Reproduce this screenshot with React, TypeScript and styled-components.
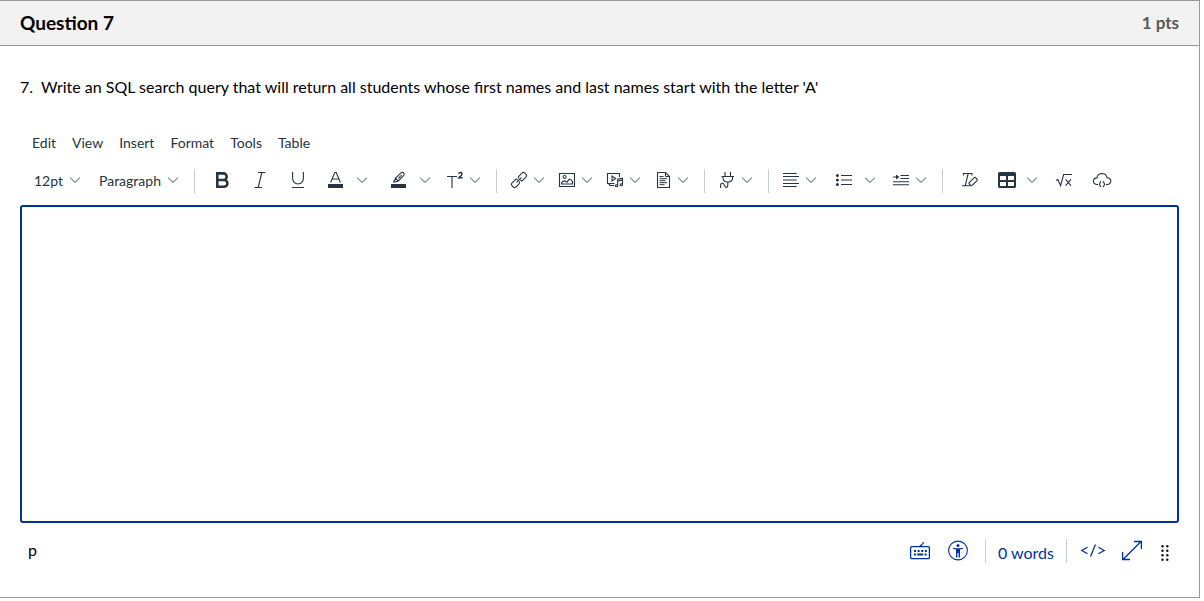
import React from "react";
import styled, { createGlobalStyle } from "styled-components";

const ink = "#273540";
const blue = "#003399";

const GlobalStyle = createGlobalStyle`
  *, *::before, *::after { box-sizing: border-box; }
  body {
    margin: 0;
    background: #ffffff;
    color: #000000;
    font-family: Lato, "Liberation Sans", sans-serif;
    font-size: 16px;
    line-height: 24px;
  }
`;

const Card = styled.main`
  margin-right: 4px;
  border: 1px solid #999999;
  border-left: 0;
`;

const Header = styled.header`
  display: flex;
  align-items: center;
  justify-content: space-between;
  padding: 10px 20px;
  background: #f2f2f2;
  border-bottom: 1px solid #999999;
`;

const Title = styled.h1`
  margin: 0;
  font-size: 19px;
  line-height: 24px;
  font-weight: 700;
`;

const Points = styled.span`
  font-size: 17px;
  font-weight: 700;
  color: #595959;
`;

const Body = styled.div`
  padding: 29px 20px 34px;
`;

const Prompt = styled.p`
  margin: 0 0 34px;
  white-space: pre-wrap;
`;

const MenuBar = styled.nav`
  display: flex;
  gap: 16px;
  padding: 0 12px;
`;

const MenuButton = styled.button`
  padding: 0;
  border: 0;
  background: none;
  color: ${ink};
  font: inherit;
  font-size: 14px;
  line-height: 20px;
`;

const Toolbar = styled.div`
  display: flex;
  align-items: center;
  height: 36px;
  margin: 10px 0 6px;
`;

const Group = styled.div<{ $start?: number; $end?: number; $gap?: number; $divided?: boolean }>`
  display: flex;
  align-items: center;
  gap: ${(p) => p.$gap ?? 0}px;
  height: 24px;
  padding-left: ${(p) => p.$start ?? 10}px;
  padding-right: ${(p) => p.$end ?? 14}px;
  border-left: ${(p) => (p.$divided ? "1px solid #c7cdd1" : "0")};
`;

const Cluster = styled.div<{ $gap?: number }>`
  display: flex;
  gap: ${(p) => p.$gap ?? 0}px;
`;

const SelectBox = styled.div<{ $width: number }>`
  display: grid;
  align-items: center;
  width: ${(p) => p.$width}px;

  > * { grid-area: 1 / 1; }
  > svg { justify-self: end; pointer-events: none; }
`;

const Select = styled.select`
  appearance: none;
  width: 100%;
  padding: 0;
  border: 0;
  background: none;
  color: ${ink};
  font: inherit;
  font-size: 14px;
  line-height: 20px;
`;

const ToolButton = styled.button<{ $width?: number }>`
  display: flex;
  align-items: center;
  justify-content: center;
  width: ${(p) => p.$width ?? 38}px;
  height: 24px;
  padding: 0;
  border: 0;
  background: none;
  color: ${ink};
`;

const DropButton = styled(ToolButton)`
  justify-content: space-between;
  padding-left: 2px;
`;

const Glyph = styled.svg`
  display: block;
  flex: none;
  overflow: visible;
  fill: none;
  stroke: currentColor;
  stroke-width: 1.1;
`;

const ChevronGlyph = styled(Glyph)`
  color: #414d57;
  stroke-width: 1;
`;

const Editor = styled.textarea`
  display: block;
  width: 100%;
  min-height: 318px;
  padding: 10px;
  border: 2px solid ${blue};
  border-radius: 3px;
  outline: 0;
  resize: none;
  font: inherit;
`;

const StatusBar = styled.footer`
  display: flex;
  align-items: center;
  justify-content: space-between;
  height: 24px;
  margin-top: 16px;
  padding-left: 8px;
`;

const ElementPath = styled.span`
  padding-bottom: 2px;
`;

const StatusTools = styled.div`
  display: flex;
  align-items: center;
`;

const StatusButton = styled(ToolButton)`
  color: ${blue};
`;

const WordCount = styled.button`
  height: 24px;
  margin: 0 6px 0 8px;
  padding: 4px 12px 0;
  border: 1px solid #c7cdd1;
  border-width: 0 1px;
  background: none;
  color: ${blue};
  font: inherit;
  line-height: 20px;
`;

const Chevron = () => (
  <ChevronGlyph width="14" height="20" viewBox="0 0 14 20" aria-hidden>
    <path d="M2.2 6.8 7 11.4 11.8 6.8" />
  </ChevronGlyph>
);

const art: Record<string, React.ReactNode> = {
  bold: <path strokeWidth="2.6" d="M5.3 2.4H11.4A3.3 3.3 0 0 1 11.4 9H5.3ZM5.3 9H12A3.4 3.4 0 0 1 12 15.8H5.3Z" />,
  italic: <path d="M8 1.5H15.5M4.5 16.5H12M11.8 1.5 8.2 16.5" />,
  underline: <path d="M4.6 1V7.6A5.4 5.4 0 0 0 15.4 7.6V1M4 16.5H16" />,
  color: (
    <>
      <path d="M4.6 11.5 8.8 1.5H10.2L14.4 11.5M6.2 8H12.8" />
      <path d="M2 13H17V17H2Z" fill="currentColor" stroke="none" />
    </>
  ),
  highlight: (
    <>
      <path d="M4.5 11.2 6.6 7.2 12.2 1.7Q14 .8 15 2.2 15.6 3.4 14.6 4.6L9 10.2 4.5 11.2M6.6 7.2 9 10.2M9.4 7.4 12.6 4.2" />
      <path d="M2 13H17V17H2Z" fill="currentColor" stroke="none" />
    </>
  ),
  superscript: (
    <>
      <path d="M2 5.5H12M7 5.5V17" />
      <path strokeWidth="1.5" d="M13.6 2.8Q14 1.5 15.4 1.5 17 1.5 17 3 17 4 13.8 6.8H17.6" />
    </>
  ),
  link: (
    <g transform="rotate(-45 10 9)">
      <path d="M8 6.2H3Q1 6.2 1 8V10Q1 11.8 3 11.8H7Q9 11.8 9 10M9 8Q9 6.2 8 6.2M12 11.8H17Q19 11.8 19 10V8Q19 6.2 17 6.2H13Q11 6.2 11 8M11 10Q11 11.8 12 11.8M6.6 9H13.4" />
    </g>
  ),
  image: (
    <>
      <path d="M2.5 2.5H17.5V15.5H2.5Z" />
      <circle cx="7.6" cy="6" r="1.5" />
      <path d="M4.5 13V11.8Q6.6 9 9 10.4L10 11.2Q12 7.8 13.2 8.2 14.6 8.4 15.5 11V13Z" />
    </>
  ),
  media: (
    <>
      <path d="M9.5 12.5H2.5V2.5H14.5V6M4 12.5Q4 14.5 6 14.5H9" />
      <path d="M7 5V10L10.6 7.5Z" />
      <path d="M12.7 14.5V8.3L17.5 7.2V13.5M12.7 10 17.5 8.9" />
      <ellipse cx="11.5" cy="14.8" rx="1.2" ry="1" />
      <ellipse cx="16.3" cy="13.8" rx="1.2" ry="1" />
    </>
  ),
  document: (
    <>
      <path d="M4.5 1.5H12.5L16.5 5.5V16.5H4.5Z" />
      <path d="M12.5 1.5V5.5H16.5M6.5 5.5H10.5M6.5 7.7H14M6.5 9.7H12.5M6.5 11.7H14M6.5 13.7H11.5" strokeWidth="1" />
    </>
  ),
  plug: (
    <path d="M8 1V5.5M13.5 1V5.5M4.6 5.5H17M6 5.5V7Q6 11 10.8 11 15.5 11 15.5 7V5.5M10.8 11V13.5Q10.8 16.4 9.3 16.4 8 16.4 7.4 14.2 6.8 12.3 5.4 12.3 3.6 12.3 3.6 14V17" />
  ),
  align: <path d="M2 2.5H15.7M2 5.5H18M2 9H15.7M2 12.5H18M2 15.5H15.7" />,
  list: (
    <>
      <path d="M7 4.5H18M7 9H18M7 13.5H18" />
      <g fill="currentColor" stroke="none">
        <circle cx="3.4" cy="4.5" r="1.5" />
        <circle cx="3.4" cy="9" r="1.5" />
        <circle cx="3.4" cy="13.5" r="1.5" />
      </g>
    </>
  ),
  indent: (
    <>
      <path d="M9.5 4.5H18M9.5 7.5H18M2 10.8H18M2 13.8H18M2 6H7" />
      <path d="M5 3.6 8.4 6 5 8.4Z" fill="currentColor" stroke="none" />
    </>
  ),
  clear: (
    <>
      <path d="M3.4 4.4V2.5H12V4.4M8.2 2.5 5.3 14.5M2 14.8H11" />
      <path d="M9.2 11.6 14.2 6.6Q15 6 15.8 6.8L17 8Q17.8 8.8 17 9.6L12.4 14.2H10.4L9.2 13Q8.6 12.2 9.2 11.6Z" />
    </>
  ),
  table: (
    <path
      fill="currentColor"
      stroke="none"
      fillRule="evenodd"
      d="M2.5 1H17.5Q19 1 19 2.5V15.5Q19 17 17.5 17H2.5Q1 17 1 15.5V2.5Q1 1 2.5 1ZM3 5V9H9V5ZM11 5V9H17V5ZM3 11V15H9V11ZM11 11V15H17V11Z"
    />
  ),
  math: <path d="M2 9.4 3.8 8.4 6.6 14.6 9.6 3.5H18M11.6 8.4 17 14.6M17 8.4 11.6 14.6" />,
  cloud: (
    <path d="M6 13.5H4.6Q1.4 13 1.4 10 1.6 7.2 5 6.9 5.4 2.5 10.2 2.5 14.2 2.7 15 6.6 18.6 7 18.8 10 18.6 13.2 15.4 13.5H14M9.2 10.6Q7.9 10.8 8.1 12L7.3 13.2 8.1 14.4Q7.9 15.6 9.2 15.8M10.8 10.6Q12.1 10.8 11.9 12L12.7 13.2 11.9 14.4Q12.1 15.6 10.8 15.8" />
  ),
  keyboard: (
    <>
      <rect x="0.6" y="5.6" width="18.8" height="12" rx="1.2" strokeWidth="1.3" />
      <path d="M9.8 5.4 10.6 4.4H11.4L13.8 1.2" />
      <path strokeWidth="2" strokeDasharray="2 1.6" d="M4 10H16.8" />
      <path strokeWidth="2" d="M4 13.6H6M7.2 13.6H13.2M14.6 13.6H16.6" />
    </>
  ),
  accessibility: (
    <>
      <circle cx="10" cy="9.5" r="9.4" />
      <circle cx="10" cy="4.6" r="1.5" fill="currentColor" stroke="none" />
      <path d="M5 6.8 8.5 7.3H11.5L15 6.8V7.8L12 8.6V16.5H10.6V12H9.4V16.5H8V8.6L5 7.8Z" fill="currentColor" stroke="none" />
    </>
  ),
  code: <path strokeWidth="1.3" d="M4.6 6.3-1.2 9.5 4.6 12.7M12.4 3.6 7.6 15.4M15.4 6.3 21.2 9.5 15.4 12.7" />,
  expand: <path strokeWidth="1.3" d="M1 18.5 19 .5M12 .5H19.4V8M.6 11V18.5H8" />,
  grip: (
    <g fill="#111111" stroke="none">
      {[5.2, 9.7, 14.2, 18.7].map((y) => (
        <React.Fragment key={y}>
          <circle cx="7.5" cy={y} r="1.2" />
          <circle cx="12.3" cy={y} r="1.2" />
        </React.Fragment>
      ))}
    </g>
  ),
};

const Icon = ({ name }: { name: string }) => (
  <Glyph width="20" height="20" viewBox="0 0 20 20" aria-hidden>
    {art[name]}
  </Glyph>
);

const Tool = ({ name, label, width }: { name: string; label: string; width?: number }) => (
  <ToolButton type="button" aria-label={label} $width={width}>
    <Icon name={name} />
  </ToolButton>
);

const SplitTool = ({ name, label, width }: { name: string; label: string; width?: number }) => (
  <Cluster>
    <Tool name={name} label={label} width={width} />
    <ToolButton type="button" aria-label={`${label} options`} $width={14}>
      <Chevron />
    </ToolButton>
  </Cluster>
);

const DropTool = ({ name, label }: { name: string; label: string }) => (
  <DropButton type="button" aria-label={label} aria-haspopup="menu" $width={39}>
    <Icon name={name} />
    <Chevron />
  </DropButton>
);

export default function App() {
  return (
    <>
      <GlobalStyle />
      <Card>
        <Header>
          <Title>Question 7</Title>
          <Points>1 pts</Points>
        </Header>
        <Body>
          <Prompt>{"7.\u00a0 Write an SQL search query that will return all students whose first names and last names start with the letter 'A'"}</Prompt>
          <MenuBar aria-label="Editor menu">
            {["Edit", "View", "Insert", "Format", "Tools", "Table"].map((m) => (
              <MenuButton type="button" key={m}>{m}</MenuButton>
            ))}
          </MenuBar>
          <Toolbar role="toolbar" aria-label="Formatting">
            <Group $start={14} $gap={17}>
              <SelectBox $width={48}>
                <Select aria-label="Font size" defaultValue="12pt">
                  <option>12pt</option>
                </Select>
                <Chevron />
              </SelectBox>
              <SelectBox $width={81}>
                <Select aria-label="Block style" defaultValue="Paragraph">
                  <option>Paragraph</option>
                </Select>
                <Chevron />
              </SelectBox>
            </Group>
            <Group $divided $start={8} $gap={11}>
              <Cluster>
                <Tool name="bold" label="Bold" />
                <Tool name="italic" label="Italic" />
                <Tool name="underline" label="Underline" />
                <SplitTool name="color" label="Text color" />
              </Cluster>
              <SplitTool name="highlight" label="Background color" />
              <DropTool name="superscript" label="Superscript and subscript" />
            </Group>
            <Group $divided $gap={9}>
              <DropTool name="link" label="Links" />
              <DropTool name="image" label="Images" />
              <DropTool name="media" label="Record or upload media" />
              <DropTool name="document" label="Documents" />
            </Group>
            <Group $divided>
              <DropTool name="plug" label="Apps" />
            </Group>
            <Group $divided $gap={12}>
              <Cluster $gap={7}>
                <DropTool name="align" label="Align" />
                <SplitTool name="list" label="List" />
              </Cluster>
              <DropTool name="indent" label="Indent" />
            </Group>
            <Group $divided $start={8} $gap={6}>
              <Cluster>
                <Tool name="clear" label="Clear formatting" />
                <SplitTool name="table" label="Table" width={36} />
              </Cluster>
              <Cluster>
                <Tool name="math" label="Insert math equation" />
                <Tool name="cloud" label="Embed" />
              </Cluster>
            </Group>
          </Toolbar>
          <Editor aria-label="Answer" />
          <StatusBar>
            <ElementPath>p</ElementPath>
            <StatusTools>
              <StatusButton type="button" aria-label="Keyboard shortcuts"><Icon name="keyboard" /></StatusButton>
              <StatusButton type="button" aria-label="Accessibility checker"><Icon name="accessibility" /></StatusButton>
              <WordCount type="button">0 words</WordCount>
              <StatusButton type="button" aria-label="HTML editor" $width={40}><Icon name="code" /></StatusButton>
              <StatusButton type="button" aria-label="Fullscreen"><Icon name="expand" /></StatusButton>
              <StatusButton type="button" aria-label="Resize" $width={28}><Icon name="grip" /></StatusButton>
            </StatusTools>
          </StatusBar>
        </Body>
      </Card>
    </>
  );
}
